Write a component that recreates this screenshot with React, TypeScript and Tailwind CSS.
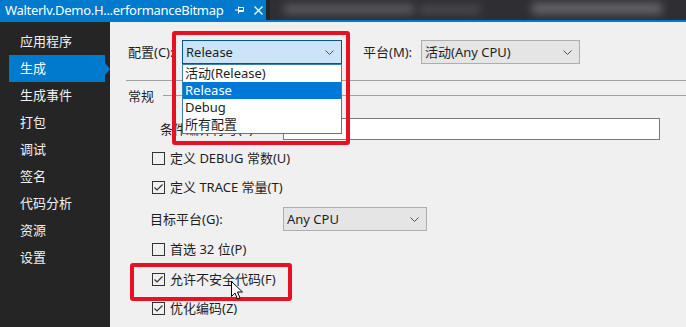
import React from 'react';

const navItems = ['应用程序', '生成', '生成事件', '打包', '调试', '签名', '代码分析', '资源', '设置'];
const configOptions = ['活动(Release)', 'Release', 'Debug', '所有配置'];

const Chevron = () => (
  <svg width="9" height="5" viewBox="0 0 9 5" className="shrink-0">
    <path d="M0.5 0.5 L4.5 4.5 L8.5 0.5" fill="none" stroke="#505050" strokeWidth="1" />
  </svg>
);

const Checkbox = ({ checked }: { checked?: boolean }) => (
  <div className="w-[13px] h-[13px] border border-[#333] bg-[#f0f0f0] flex items-center justify-center shrink-0">
    {checked && (
      <svg width="11" height="11" viewBox="0 0 11 11">
        <path d="M1.5 5.5 L4 8 L9.5 2.5" fill="none" stroke="#333" strokeWidth="1.2" />
      </svg>
    )}
  </div>
);

const CheckRow = ({ label, checked, className }: { label: string; checked?: boolean; className: string }) => (
  <div className={`flex items-center h-[18px] ml-[26px] ${className}`}>
    <Checkbox checked={checked} />
    <span className="ml-[5px]">{label}</span>
  </div>
);

const App = () => {
  return (
    <div
      className="relative w-[686px] h-[327px] overflow-hidden flex flex-col text-[13px] leading-none text-[#1e1e1e]"
      style={{ fontFamily: '"Noto Sans", "Noto Sans CJK SC", sans-serif' }}
    >
      {/* title bar */}
      <div className="flex h-[20px] shrink-0">
        <div className="w-[266px] bg-[#007acc] flex items-center text-white pl-[5px]">
          <span className="tracking-[-0.3px]">Walterlv.Demo.H...erformanceBitmap</span>
          <svg width="9" height="8" viewBox="0 0 9 8" className="ml-[12px]">
            <path d="M0 4 H3 M3.5 0.5 V7.5 M3.5 1.5 H8.5 V5.5 H3.5 M3.5 4.5 H8.5" fill="none" stroke="white" strokeWidth="1" />
          </svg>
          <svg width="9" height="9" viewBox="0 0 9 9" className="ml-[10px]">
            <path d="M0.5 0.5 L8.5 8.5 M8.5 0.5 L0.5 8.5" stroke="white" strokeWidth="1.3" />
          </svg>
        </div>
        <div className="flex-1 relative bg-[#2f2f33] border-l-4 border-[#252526] overflow-hidden">
          <div className="absolute left-[14px] top-[4px] w-[130px] h-[10px] bg-[#5a5a5e] blur-[4px]" />
          <div className="absolute left-[150px] top-[5px] w-[60px] h-[9px] bg-[#4a4a4e] blur-[4px]" />
          <div className="absolute left-[262px] top-[3px] w-[130px] h-[11px] bg-[#66666a] blur-[4px]" />
        </div>
      </div>
      <div className="h-[2px] bg-[#007acc] shrink-0" />

      <div className="flex flex-1">
        {/* sidebar */}
        <div className="w-[110px] bg-[#252526] pt-[6px] shrink-0">
          {navItems.map((item) =>
            item === '生成' ? (
              <div key={item} className="relative ml-[9px] w-[96px] h-[27px] bg-[#007acc] text-white flex items-center pl-[11px]">
                {item}
                <div className="absolute right-[-5px] top-[8px] w-0 h-0 border-y-[6px] border-y-transparent border-l-[5px] border-l-[#007acc]" />
              </div>
            ) : (
              <div key={item} className="h-[27px] flex items-center pl-[20px] text-[#f1f1f1]">
                {item}
              </div>
            )
          )}
        </div>

        {/* content */}
        <div className="flex-1 bg-[#f0f0f0] pl-[16px] pt-[18px]">
          <div className="flex items-center h-[24px] ml-[2px]">
            <span className="w-[54px]">配置(C):</span>
            <div className="relative">
              <div className="w-[160px] h-[24px] bg-[#cce4f7] border border-[#005499] flex items-center justify-between pl-[3px] pr-[7px]">
                <span>Release</span>
                <Chevron />
              </div>
              <div className="absolute top-full left-0 w-[160px] bg-white border border-[#3c7fb1] z-10">
                {configOptions.map((opt) => (
                  <div
                    key={opt}
                    className={`h-[17px] flex items-center pl-[2px] ${opt === 'Release' ? 'bg-[#0078d7] text-white' : ''}`}
                  >
                    {opt}
                  </div>
                ))}
              </div>
            </div>
            <span className="ml-[21px] w-[58px]">平台(M):</span>
            <div className="w-[159px] h-[24px] bg-[#e5e5e5] border border-[#adadad] flex items-center justify-between pl-[3px] pr-[7px]">
              <span>活动(Any CPU)</span>
              <Chevron />
            </div>
          </div>

          <div className="mt-[16px] h-px bg-[#a0a0a0]" />

          <div className="flex items-center h-[18px] mt-[6px]">
            <span className="ml-[2px]">常规</span>
            <div className="flex-1 h-px bg-[#a0a0a0] ml-[9px] mt-[-2px]" />
          </div>

          <div className="flex items-center mt-[13px] ml-[34px]">
            <span className="w-[123px]">条件编译符号(Y):</span>
            <div className="w-[377px] h-[22px] bg-white border border-[#7a7a7a]" />
          </div>

          <CheckRow label="定义 DEBUG 常数(U)" className="mt-[9px]" />
          <CheckRow label="定义 TRACE 常量(T)" checked className="mt-[11px]" />

          <div className="flex items-center mt-[11px] ml-[24px]">
            <span className="w-[133px]">目标平台(G):</span>
            <div className="w-[144px] h-[24px] bg-[#e5e5e5] border border-[#adadad] flex items-center justify-between pl-[3px] pr-[7px]">
              <span>Any CPU</span>
              <Chevron />
            </div>
          </div>

          <CheckRow label="首选 32 位(P)" className="mt-[9px]" />
          <CheckRow label="允许不安全代码(F)" checked className="mt-[12px]" />
          <CheckRow label="优化编码(Z)" checked className="mt-[11px]" />
        </div>
      </div>

      {/* annotations */}
      <div className="absolute left-[172px] top-[31px] w-[178px] h-[114px] border-4 border-[#e81123] rounded-[3px] z-20" />
      <div className="absolute left-[130px] top-[263px] w-[162px] h-[38px] border-4 border-[#e81123] rounded-[3px] z-20" />
      <svg width="13" height="20" viewBox="0 0 13 20" className="absolute left-[231px] top-[281px] z-30">
        <path d="M0.5 0.5 V15.5 L4 12 L6.5 18 L9 17 L6.5 11 H11.5 Z" fill="white" stroke="black" strokeWidth="1" />
      </svg>
    </div>
  );
};

export default App;
